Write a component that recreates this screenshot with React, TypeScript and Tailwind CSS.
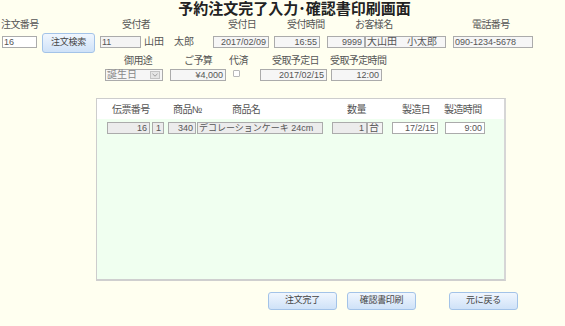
import React from "react";

const inputBase =
  "shrink-0 h-[12px] border border-[#ababab] text-[9px] leading-[10px] text-[#555] overflow-hidden whitespace-nowrap";

function Box({
  w,
  ml = 0,
  text = "",
  align = "right",
  bg = "bg-[#f6f6f6]",
  extra = "",
}: {
  w: string;
  ml?: number;
  text?: string;
  align?: "left" | "right";
  bg?: string;
  extra?: string;
}) {
  return (
    <div
      className={`${inputBase} ${w} ${bg} ${align === "right" ? "text-right pr-[2px]" : "text-left pl-[1px]"} ${extra}`}
      style={{ marginLeft: ml }}
    >
      {text}
    </div>
  );
}

function Btn({ w, label, ml = 0, h }: { w: string; label: string; ml?: number; h: string }) {
  return (
    <div
      className={`shrink-0 ${w} ${h} flex items-center justify-center rounded-[3px] border border-[#a3c3e8] bg-linear-to-b from-[#f0f6fe] to-[#cfe2f8] text-[9px] text-[#444] tracking-[-0.3px]`}
      style={{ marginLeft: ml }}
    >
      {label}
    </div>
  );
}

export default function App() {
  return (
    <div className="w-[565px] h-[326px] overflow-hidden bg-[#fffff0] font-['Liberation_Sans','Noto_Sans_CJK_JP',sans-serif] text-[#555]">
      {/* title */}
      <div className="h-[18px] pl-[24px] text-center text-[15px] font-bold leading-[18px] text-[#222]">
        予約注文完了入力･確認書印刷画面
      </div>

      {/* row 1 labels */}
      <div className="flex h-[13px] text-[10px] leading-[13px] tracking-[-0.6px] text-[#555]">
        <div className="w-[122px] shrink-0 pl-[1px]">注文番号</div>
        <div className="w-[106px] shrink-0">受付者</div>
        <div className="w-[59px] shrink-0">受付日</div>
        <div className="w-[68px] shrink-0">受付時間</div>
        <div className="w-[117px] shrink-0">お客様名</div>
        <div className="shrink-0">電話番号</div>
      </div>

      {/* row 1 inputs */}
      <div className="mt-[2px] flex h-[20px] items-start pl-[2px]">
        <Box w="w-[35px]" text="16" align="left" bg="bg-white" extra="mt-[3px]" />
        <Btn w="w-[53px]" h="h-[20px]" label="注文検索" ml={5} />
        <Box w="w-[41px]" ml={5} text="11" align="left" bg="bg-[#f4f4f4]" extra="mt-[3px]" />
        <div className="mt-[2px] w-[72px] shrink-0 pl-[3px] text-[10px] leading-[13px] text-[#555]">山田　太郎</div>
        <Box w="w-[56px]" text="2017/02/09" extra="mt-[3px]" />
        <Box w="w-[46px]" ml={5} text="16:55" extra="mt-[3px]" />
        <Box w="w-[38px]" ml={7} text="9999" extra="mt-[3px]" />
        <Box w="w-[81px]" text="大山田　小太郎" align="left" extra="mt-[3px] text-[10px]" />
        <Box w="w-[80px]" ml={7} text="090-1234-5678" align="left" extra="mt-[3px]" />
      </div>

      {/* row 2 labels */}
      <div className="mt-[2px] flex h-[12px] text-[10px] leading-[12px] tracking-[-0.6px] text-[#555]">
        <div className="w-[184px] shrink-0 pl-[124px]">御用途</div>
        <div className="w-[45px] shrink-0">ご予算</div>
        <div className="w-[43px] shrink-0">代済</div>
        <div className="w-[58px] shrink-0">受取予定日</div>
        <div className="shrink-0">受取予定時間</div>
      </div>

      {/* row 2 inputs */}
      <div className="mt-[2px] flex h-[12px] items-start pl-[105px]">
        <div className="flex h-[12px] w-[58px] shrink-0 items-center justify-between border border-[#ababab] bg-[#f6f6f6] pl-[1px] pr-[2px] text-[10px] leading-[10px] text-[#888]">
          <span>誕生日</span>
          <span className="flex h-[8px] w-[10px] items-center justify-center border border-[#c4c4c4] bg-[#e6e6e6]">
            <svg width="6" height="4" viewBox="0 0 6 4">
              <path d="M0.5 0.8 L3 3.2 L5.5 0.8" fill="none" stroke="#999" strokeWidth="0.9" />
            </svg>
          </span>
        </div>
        <Box w="w-[56px]" ml={7} text="¥4,000" />
        <div className="ml-[7px] mt-[1px] h-[7px] w-[7px] shrink-0 rounded-[1px] border border-[#b8b8b8] bg-white" />
        <Box w="w-[67px]" ml={20} text="2017/02/15" />
        <Box w="w-[51px]" ml={4} text="12:00" />
      </div>

      {/* panel */}
      <div className="ml-[96px] mt-[17px] flex h-[183px] w-[410px] flex-col border border-[#cdcdcd] border-b-2 border-r-2 border-b-[#cfcfcf] border-r-[#d6d6d6]">
        <div className="flex h-[20px] shrink-0 items-center bg-white pl-[15px] text-[10px] tracking-[-0.6px] text-[#555]">
          <div className="w-[61px] shrink-0">伝票番号</div>
          <div className="w-[59px] shrink-0">商品№</div>
          <div className="w-[115px] shrink-0">商品名</div>
          <div className="w-[55px] shrink-0">数量</div>
          <div className="w-[42px] shrink-0">製造日</div>
          <div className="shrink-0">製造時間</div>
        </div>
        <div className="flex-1 bg-[#f0fff0]">
          <div className="mt-[3px] flex pl-[10px]">
            <Box w="w-[43px]" text="16" bg="bg-[#ececec]" />
            <Box w="w-[12px]" ml={2} text="1" bg="bg-[#ececec]" />
            <Box w="w-[28px]" ml={4} text="340" bg="bg-[#ececec]" />
            <Box w="w-[126px]" ml={1} text="デコレーションケーキ 24cm" align="left" bg="bg-[#ececec]" />
            <Box w="w-[35px]" ml={9} text="1" bg="bg-[#ececec]" />
            <Box w="w-[16px]" text="台" align="left" bg="bg-[#f4f4f4]" extra="text-[10px]" />
            <Box w="w-[46px]" ml={9} text="17/2/15" bg="bg-white" extra="text-center" />
            <Box w="w-[40px]" ml={7} text="9:00" bg="bg-white" />
          </div>
        </div>
      </div>

      {/* bottom buttons */}
      <div className="mt-[11px] flex pl-[268px]">
        <Btn w="w-[69px]" h="h-[18px]" label="注文完了" />
        <Btn w="w-[69px]" h="h-[18px]" label="確認書印刷" ml={10} />
        <Btn w="w-[69px]" h="h-[18px]" label="元に戻る" ml={33} />
      </div>
    </div>
  );
}
